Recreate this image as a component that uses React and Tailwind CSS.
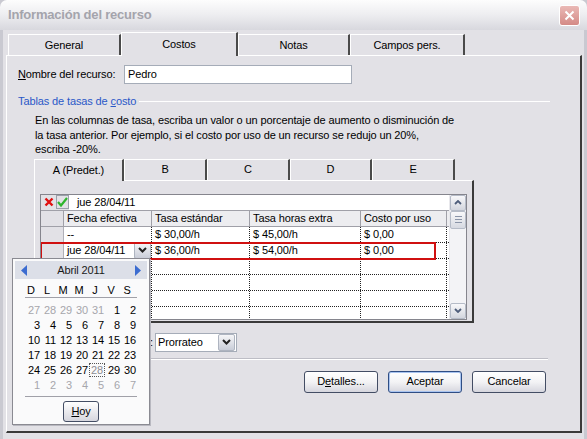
import React from 'react'

const weeks = [
  [[27, 1], [28, 1], [29, 1], [30, 1], [31, 1], [1, 0], [2, 0]],
  [[3, 0], [4, 0], [5, 0], [6, 0], [7, 0], [8, 0], [9, 0]],
  [[10, 0], [11, 0], [12, 0], [13, 0], [14, 0], [15, 0], [16, 0]],
  [[17, 0], [18, 0], [19, 0], [20, 0], [21, 0], [22, 0], [23, 0]],
  [[24, 0], [25, 0], [26, 0], [27, 0], [28, 2], [29, 0], [30, 0]],
  [[1, 1], [2, 1], [3, 1], [4, 1], [5, 1], [6, 1], [7, 1]],
]

const rows = [
  ['--', '$ 30,00/h', '$ 45,00/h', '$ 0,00'],
  ['jue 28/04/11', '$ 36,00/h', '$ 54,00/h', '$ 0,00'],
  ['', '', '', ''],
  ['', '', '', ''],
  ['', '', '', ''],
  ['', '', '', ''],
]

const colW = ['w-[88px]', 'w-[98px]', 'w-[111px]', 'w-[86px]']

function DropBtn({ dark }) {
  return (
    <div className="w-[17px] h-[17px] border border-[#AEB4C0] rounded-[2px] bg-gradient-to-b from-[#F6F6F8] to-[#C9CDD8] flex items-center justify-center shrink-0">
      <svg width="9" height="6" viewBox="0 0 9 6">
        <path d="M1 1 L4.5 4.5 L8 1" stroke={dark ? '#222' : '#4E5D7A'} strokeWidth="2" fill="none" />
      </svg>
    </div>
  )
}

function ScrollBtn({ up }) {
  return (
    <div className="w-[16px] h-[16px] border border-[#B5BBC7] rounded-[2px] bg-gradient-to-b from-[#F8F8FA] to-[#D3D6DE] flex items-center justify-center">
      <svg width="8" height="5" viewBox="0 0 8 5">
        <path d={up ? 'M1 4 L4 1 L7 4' : 'M1 1 L4 4 L7 1'} stroke="#4E5D7A" strokeWidth="1.8" fill="none" />
      </svg>
    </div>
  )
}

function Tab({ label, w, selected }) {
  return (
    <div
      className={`${w} ${selected ? 'h-[24px] -mb-px bg-[#E2E1E6] z-10' : 'h-[21px]'} border-t border-l border-white border-r-2 border-r-[#4A4A4A] flex items-center justify-center`}
    >
      {label}
    </div>
  )
}

function InnerTab({ label, w, selected }) {
  return (
    <div
      className={`${w} ${selected ? '-mb-px bg-[#E2E1E6] z-10 h-[22px]' : 'h-[21px]'} border-t border-l border-white border-r-2 border-r-[#4A4A4A] flex items-center justify-center`}
    >
      {label}
    </div>
  )
}

function XPButton({ children, isDefault }) {
  return (
    <button
      className={`w-[74px] h-[22px] rounded-[3px] border ${isDefault ? 'border-[#2F4D84] shadow-[inset_0_0_0_1px_#A9C4F0]' : 'border-[#434D64]'} bg-gradient-to-b from-white via-[#F3F3F5] to-[#D6D6DE] text-[11px] text-black`}
    >
      {children}
    </button>
  )
}

function Calendar() {
  return (
    <div className="absolute left-[12px] top-[258px] w-[138px] h-[167px] border border-[#8A8A92] bg-[#FAFAFB] shadow-[1px_1px_0_#B8B8C0] px-[2px] pt-[2px]">
      <div className="h-[18px] bg-[#DCDFE8] flex items-center justify-between px-[6px]">
        <svg width="7" height="11" viewBox="0 0 7 11"><path d="M6 0 L0 5.5 L6 11 Z" fill="#3C6CD0" /></svg>
        <span className="text-[11px] text-[#1A1A1A]">Abril 2011</span>
        <svg width="7" height="11" viewBox="0 0 7 11"><path d="M1 0 L7 5.5 L1 11 Z" fill="#3C6CD0" /></svg>
      </div>
      <div className="mx-[10px] mt-[3px] grid grid-cols-7 h-[16px] items-center text-center border-b border-[#A0A0A8]">
        {['D', 'L', 'M', 'M', 'J', 'V', 'S'].map((d, i) => (
          <span key={i} className="pr-[4px]">{d}</span>
        ))}
      </div>
      <div className="mx-[10px] mt-[4px] pb-[4px] border-b border-[#A0A0A8]">
        {weeks.map((w, i) => (
          <div key={i} className="grid grid-cols-7 h-[15px] items-center text-right">
            {w.map(([n, s], j) => (
              <span key={j} className={`pr-[1px] ${s === 1 ? 'text-[#A6A6AC]' : s === 2 ? 'text-[#8C8C92]' : 'text-black'}`}>
                {s === 2 ? <span className="border border-dotted border-[#555] px-[1px]">{n}</span> : n}
              </span>
            ))}
          </div>
        ))}
      </div>
      <div className="flex justify-center mt-[4px]">
        <button className="w-[36px] h-[21px] rounded-[3px] border border-[#434D64] bg-gradient-to-b from-white to-[#D6D6DE] text-[11px]">
          <span className="underline">H</span>oy
        </button>
      </div>
    </div>
  )
}

export default function App() {
  return (
    <div className="w-[587px] h-[439px] relative overflow-hidden bg-[#C9C9D1] font-['Liberation_Sans','Arial',sans-serif] text-[11px] tracking-[-0.12px] text-black">
      {/* Title bar */}
      <div className="h-[30px] rounded-t-[7px] bg-gradient-to-b from-[#FDFDFD] via-[#EDEDF0] to-[#D8D8DE] flex items-center justify-between pl-[8px] pr-[7px]">
        <span className="text-[13px] font-bold text-[#A4A4AC] tracking-[-0.2px]">Información del recurso</span>
        <div className="w-[21px] h-[21px] rounded-[3px] border border-white bg-gradient-to-b from-[#EAB9B6] to-[#D48A86] flex items-center justify-center">
          <svg width="11" height="11" viewBox="0 0 11 11">
            <path d="M1.5 1.5 L9.5 9.5 M9.5 1.5 L1.5 9.5" stroke="white" strokeWidth="2" />
          </svg>
        </div>
      </div>

      {/* Body */}
      <div className="ml-[3px] mr-[3px] h-[409px] bg-[#E2E1E6] pl-[3px] pr-[2px] pt-[1px]">
        {/* Tabs */}
        <div className="flex items-end h-[24px] pl-[2px]">
          <Tab label="General" w="w-[113px]" />
          <Tab label="Costos" w="w-[117px]" selected />
          <Tab label="Notas" w="w-[112px]" />
          <Tab label="Campos pers." w="w-[115px]" />
        </div>

        {/* Panel */}
        <div className="h-[378px] border-t border-l border-white border-r-2 border-b-2 border-r-[#3A3A3A] border-b-[#3A3A3A] bg-[#E2E1E6] flex flex-col">
          <div className="flex items-center mt-[9px] pl-[11px] h-[19px]">
            <span className="w-[106px]">
              <span className="underline">N</span>ombre del recurso:
            </span>
            <div className="w-[228px] h-[19px] border border-[#A5ACB8] bg-white flex items-center pl-[3px]">Pedro</div>
          </div>

          <div className="flex items-center mt-[10px] h-[14px] pl-[11px] pr-[30px]">
            <span className="text-[#2A58C8]">
              Tablas de tasas de <span className="underline">c</span>osto
            </span>
            <div className="flex-1 ml-[3px] h-px bg-[#C2C2CA] border-b border-white" />
          </div>

          <p className="mt-[5px] ml-[28px] leading-[14.5px]">
            En las columnas de tasa, escriba un valor o un porcentaje de aumento o disminución de
            <br />
            la tasa anterior. Por ejemplo, si el costo por uso de un recurso se redujo un 20%,
            <br />
            escriba -20%.
          </p>

          {/* Inner tabs */}
          <div className="flex items-end mt-[2px] ml-[27px] h-[21px]">
            <InnerTab label="A (Predet.)" w="w-[90px]" selected />
            <InnerTab label="B" w="w-[83px]" />
            <InnerTab label="C" w="w-[83px]" />
            <InnerTab label="D" w="w-[82px]" />
            <InnerTab label="E" w="w-[83px]" />
          </div>

          <div className="ml-[27px] w-[440px] h-[143px] border-t border-l border-white border-r-2 border-b-2 border-r-[#3A3A3A] border-b-[#3A3A3A] pt-[13px] pl-[5px]">
            {/* Grid */}
            <div className="relative w-[427px] h-[126px] border border-[#85858D] bg-white flex overflow-hidden">
              <div className="w-[408px] flex flex-col">
                <div className="h-[16px] flex items-center border-b border-[#A0A0A8]">
                  <div className="w-[28px] h-full flex items-center gap-[1px] pl-[1px] bg-[#E2E1E6]">
                    <div className="w-[13px] h-[14px] flex items-center justify-center">
                      <svg width="10" height="10" viewBox="0 0 10 10">
                        <path d="M1.5 1.5 L8.5 8.5 M8.5 1.5 L1.5 8.5" stroke="#E01010" strokeWidth="2.4" />
                      </svg>
                    </div>
                    <div className="w-[13px] h-[14px] flex items-center justify-center border border-[#9AA0AA]">
                      <svg width="11" height="10" viewBox="0 0 11 10">
                        <path d="M1 5 L4 8.5 L10 1" stroke="#2DB52D" strokeWidth="2.2" fill="none" />
                      </svg>
                    </div>
                  </div>
                  <span className="ml-[8px]">jue 28/04/11</span>
                </div>
                <div className="h-[16px] flex bg-[#EDEDF0] border-b border-[#A0A0A8]">
                  <div className="w-[23px] border-r border-[#A0A0A8] bg-[#E2E1E6]" />
                  {['Fecha efectiva', 'Tasa estándar', 'Tasa horas extra', 'Costo por uso'].map((h, i) => (
                    <div key={i} className={`${colW[i]} border-r border-[#A0A0A8] pl-[3px] flex items-center`}>
                      {h}
                    </div>
                  ))}
                </div>
                {rows.map((r, i) => (
                  <div key={i} className="h-[16px] flex border-b border-dotted border-[#222] shrink-0">
                    <div className="w-[23px] border-r border-[#B0B0B8] bg-[#E2E1E6]" />
                    {r.map((c, j) => (
                      <div
                        key={j}
                        className={`${colW[j]} border-r border-dotted border-[#222] pl-[3px] flex items-center justify-between`}
                      >
                        <span>{c}</span>
                        {i === 1 && j === 0 && <DropBtn dark />}
                      </div>
                    ))}
                  </div>
                ))}
              </div>
              <div className="flex-1" />
              <div className="w-[17px] flex flex-col bg-[#F3F3F6] border-l border-[#E8E8EC]">
                <ScrollBtn up />
                <div className="w-[16px] h-[18px] border border-[#B5BBC7] rounded-[2px] bg-gradient-to-b from-[#F8F8FA] to-[#D6D9E1] flex flex-col items-center justify-center gap-[2px]">
                  <div className="w-[7px] h-px bg-[#8A94A8]" />
                  <div className="w-[7px] h-px bg-[#8A94A8]" />
                  <div className="w-[7px] h-px bg-[#8A94A8]" />
                </div>
                <div className="flex-1" />
                <ScrollBtn />
              </div>
              {/* selection outline */}
              <div className="absolute left-[-1px] top-[47px] w-[396px] h-[18px] border-2 border-[#D01010] pointer-events-none" />
            </div>
          </div>

          {/* Accrual row: label is covered by the calendar, only the colon shows */}
          <div className="flex items-center mt-[10px] h-[19px] pl-[143px]">
            <span className="w-[5px]">:</span>
            <div className="w-[82px] h-[19px] border border-[#A5ACB8] bg-white flex items-center justify-between pl-[2px] pr-[1px]">
              <span>Prorrateo</span>
              <DropBtn dark />
            </div>
          </div>

          <div className="mt-[6px] ml-[11px] w-[530px] h-[2px] border-t border-[#BDBDC5] border-b border-b-white" />

          <div className="flex justify-end gap-[10px] mt-[11px] pr-[34px]">
            <XPButton>
              D<span className="underline">e</span>talles...
            </XPButton>
            <XPButton isDefault>Aceptar</XPButton>
            <XPButton>Cancelar</XPButton>
          </div>
        </div>
      </div>

      <Calendar />
    </div>
  )
}
